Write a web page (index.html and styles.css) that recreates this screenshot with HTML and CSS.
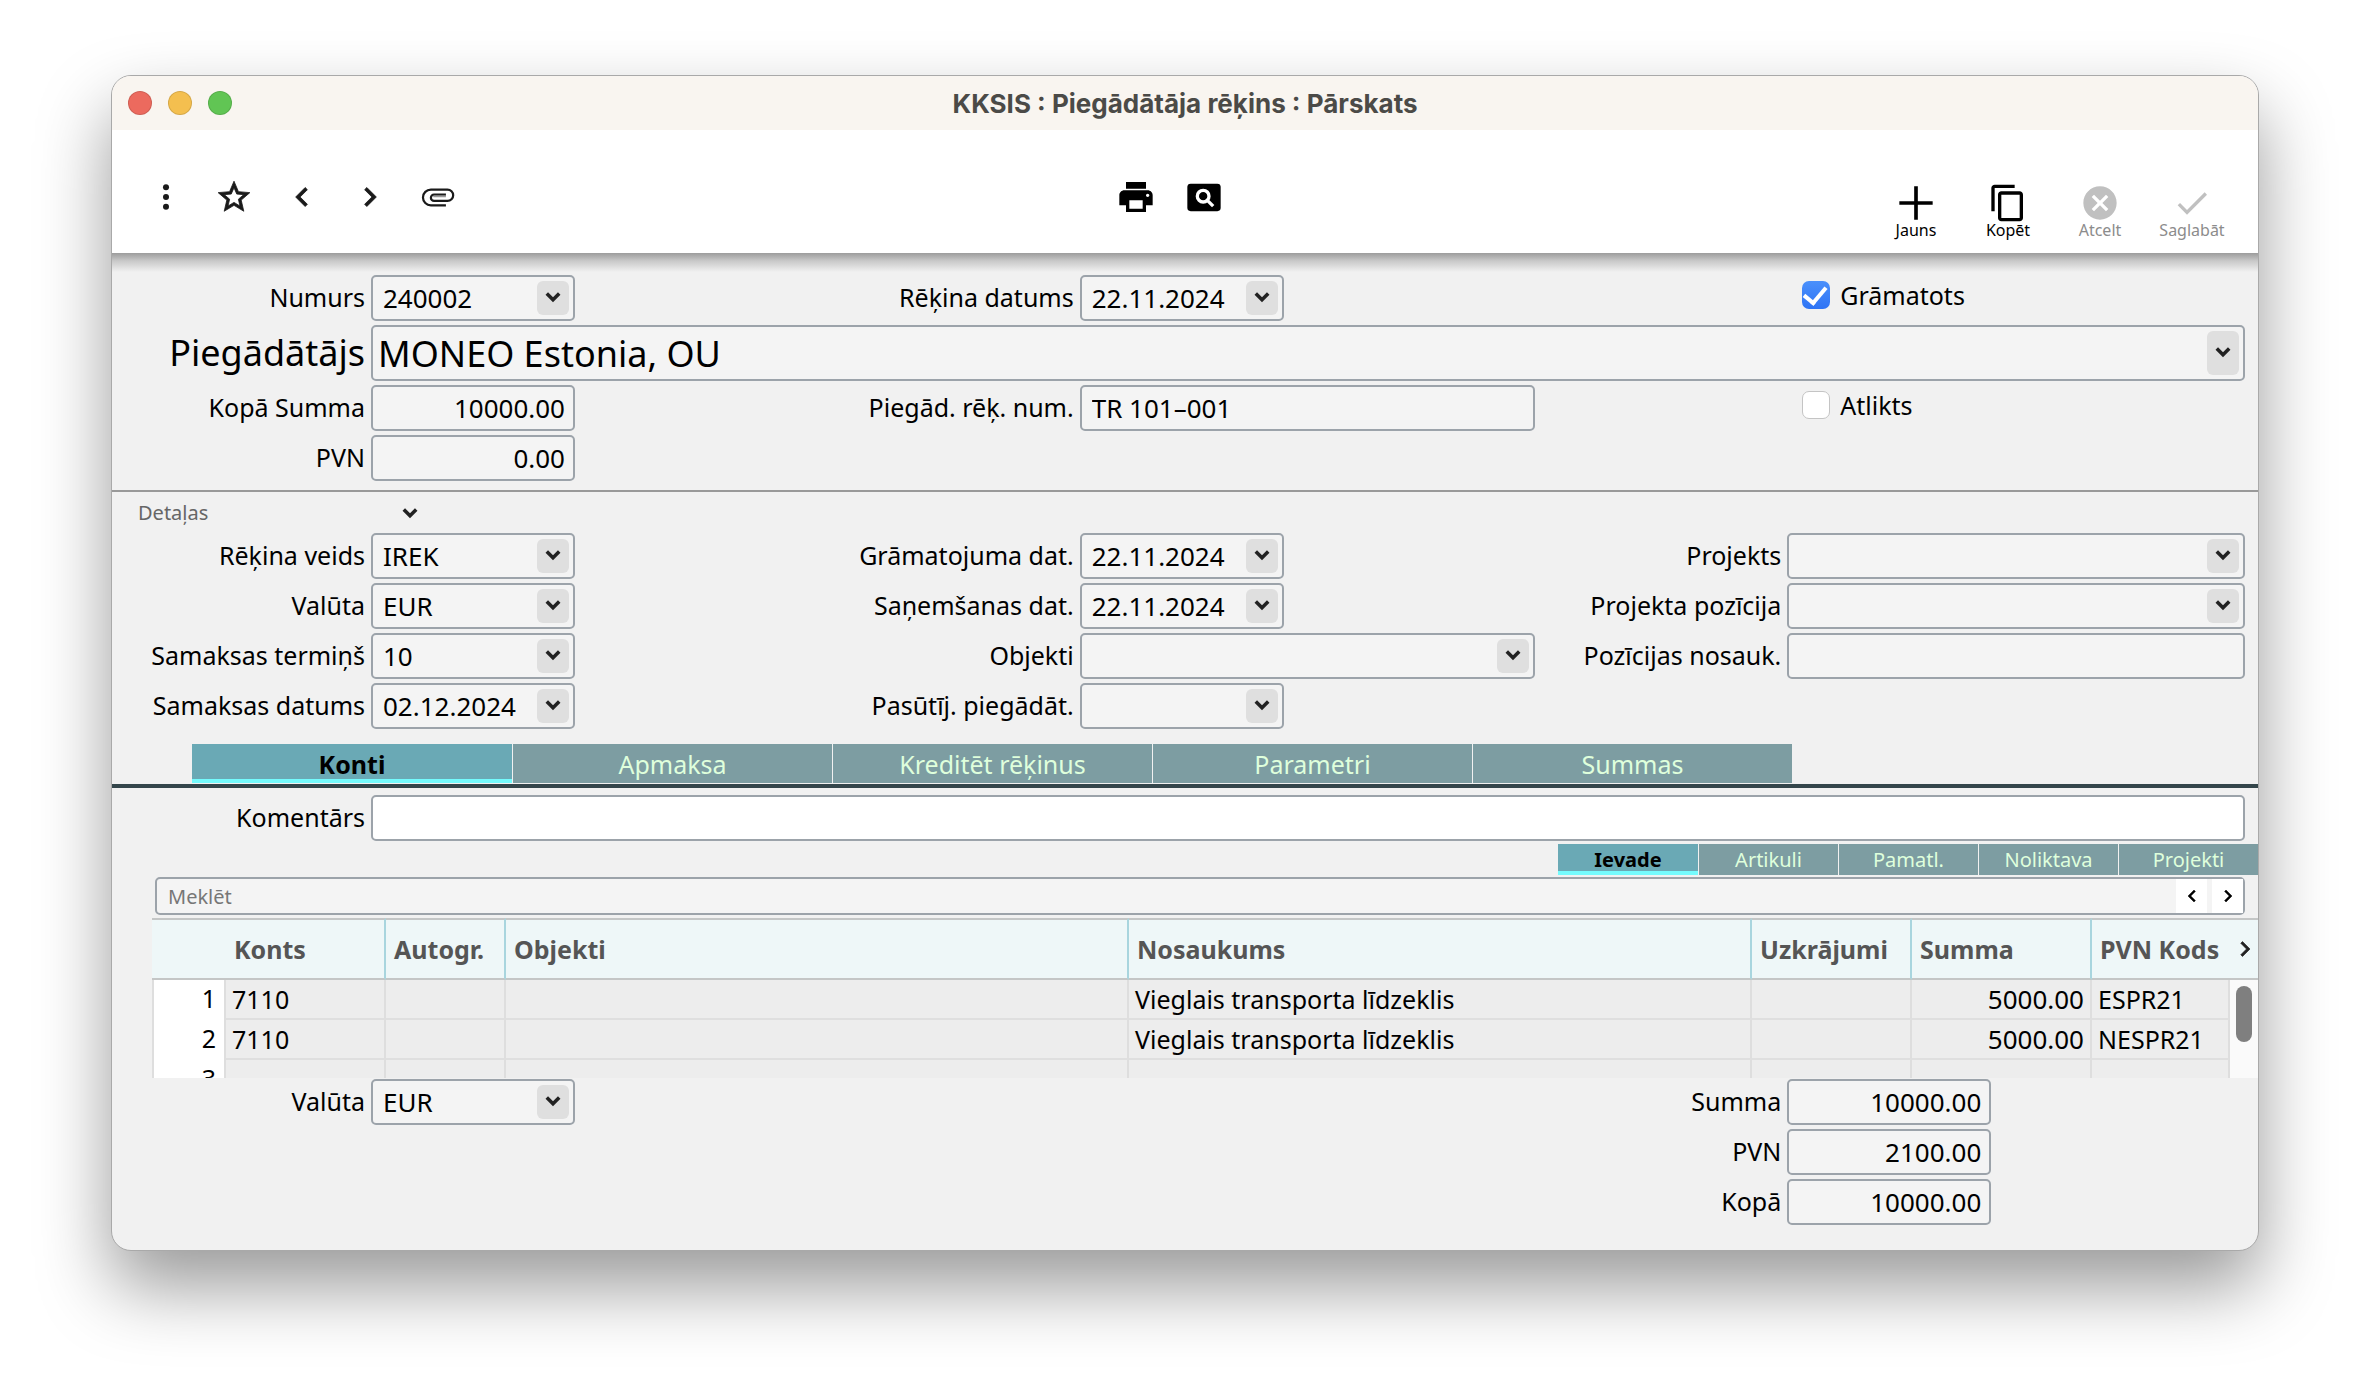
FILE: index.html
```html
<!DOCTYPE html>
<html lang="lv">
<head>
  <meta charset="UTF-8" />
  <meta name="viewport" content="width=device-width, initial-scale=1.0"/>
  <title>KKSIS : Piegādātāja rēķins : Pārskats</title>
  <link rel="stylesheet" href="styles.css">
</head>
<body>

  <!-- Shared icons -->
  <svg class="sprite" aria-hidden="true">
    <symbol id="chevron-down" viewBox="0 0 18 12"><path d="M2 2l7 7 7-7" fill="none" stroke="currentColor" stroke-width="4"/></symbol>
    <symbol id="chevron-left" viewBox="0 0 24 24"><path d="M15.4 7.4L14 6l-6 6 6 6 1.4-1.4L10.8 12z" stroke="currentColor" stroke-width=".5"/></symbol>
    <symbol id="chevron-right" viewBox="0 0 24 24"><path d="M10 6L8.6 7.4l4.6 4.6-4.6 4.6L10 18l6-6z" stroke="currentColor" stroke-width=".5"/></symbol>
  </svg>

  <main class="window">
    <header class="titlebar">
      <div class="lights">
        <button class="light red" aria-label="Aizvērt"></button>
        <button class="light yellow" aria-label="Minimizēt"></button>
        <button class="light green" aria-label="Palielināt"></button>
      </div>
      <h1>KKSIS : Piegādātāja rēķins : Pārskats</h1>
    </header>

    <div class="toolbar">
      <div class="tools">
        <button aria-label="Izvēlne"><svg viewBox="0 0 24 24"><circle cx="12" cy="5.8" r="1.9"/><circle cx="12" cy="12" r="1.9"/><circle cx="12" cy="18.2" r="1.9"/></svg></button>
        <button aria-label="Izlase"><svg viewBox="0 0 24 24"><path d="M22 9.24l-7.19-.62L12 2 9.19 8.63 2 9.24l5.46 4.73L5.82 21 12 17.27 18.18 21l-1.63-7.03L22 9.24zM12 15.4l-3.76 2.27 1-4.28-3.32-2.88 4.38-.38L12 6.1l1.71 4.04 4.38.38-3.32 2.88 1 4.28L12 15.4z" stroke="currentColor" stroke-width=".5"/></svg></button>
        <button aria-label="Iepriekšējais"><svg><use href="#chevron-left"/></svg></button>
        <button aria-label="Nākamais"><svg><use href="#chevron-right"/></svg></button>
        <button aria-label="Pielikumi"><svg viewBox="0 0 24 24"><path d="M17 17.3H7.500a5 5 0 0 1 0-10H18a3.600 3.600 0 0 1 0 7.200H9.500a2 2 0 0 1 0-4H17" fill="none" stroke="currentColor" stroke-width="1.400"/><path d="M9 11.600h8" stroke="#999" stroke-width="1.200"/></svg></button>
      </div>
      <div class="tools print-tools">
        <button aria-label="Drukāt"><svg viewBox="0 0 24 24"><path d="M19 8H5c-1.66 0-3 1.34-3 3v6h4v4h12v-4h4v-6c0-1.66-1.34-3-3-3zm-3 11H8v-5h8v5zm3-7c-.55 0-1-.45-1-1s.45-1 1-1 1 .45 1 1-.45 1-1 1zm-1-9H6v4h12V3z"/></svg></button>
        <button aria-label="Priekšskatīt"><svg viewBox="0 0 24 24"><rect x="2" y="4" width="20" height="16.500" rx="2"/><circle cx="11.500" cy="11.500" r="3.500" fill="none" stroke="#fff" stroke-width="2"/><path d="M14 14l3.500 3.500" stroke="#fff" stroke-width="2"/></svg></button>
      </div>
      <div class="actions">
        <button><svg viewBox="0 0 24 24"><path d="M12 2v20M2 12h20" stroke="currentColor" stroke-width="2.2"/></svg>Jauns</button>
        <button><svg viewBox="0 0 24 24"><path d="M16 1H4c-1.1 0-2 .9-2 2v14h2V3h12V1zm3 4H8c-1.1 0-2 .9-2 2v14c0 1.1.9 2 2 2h11c1.1 0 2-.9 2-2V7c0-1.1-.9-2-2-2zm0 16H8V7h11v14z"/></svg>Kopēt</button>
        <button disabled><svg viewBox="0 0 24 24"><path d="M12 2C6.47 2 2 6.47 2 12s4.47 10 10 10 10-4.47 10-10S17.53 2 12 2zm5 13.59L15.59 17 12 13.41 8.41 17 7 15.59 10.59 12 7 8.41 8.41 7 12 10.59 15.59 7 17 8.41 13.41 12 17 15.59z"/></svg>Atcelt</button>
        <button disabled><svg viewBox="0 0 24 24"><path d="M9 16.17L4.83 12l-1.42 1.41L9 19 21 7l-1.41-1.41z"/></svg>Saglabāt</button>
      </div>
    </div>

    <!-- Invoice header -->
    <section class="form head-form">
      <label for="number">Numurs</label>
      <div class="combo short">
        <select id="number"><option>240002</option></select>
        <svg><use href="#chevron-down"/></svg>
      </div>
      <label for="invoiceDate">Rēķina datums</label>
      <div class="combo short">
        <select id="invoiceDate"><option>22.11.2024</option></select>
        <svg><use href="#chevron-down"/></svg>
      </div>
      <label class="check"><input type="checkbox" checked>Grāmatots</label>

      <label for="supplier" class="big">Piegādātājs</label>
      <div class="combo big full">
        <select id="supplier"><option>MONEO Estonia, OU</option></select>
        <svg><use href="#chevron-down"/></svg>
      </div>

      <label for="total">Kopā Summa</label>
      <input type="text" id="total" class="short number" value="10000.00">
      <label for="supplierNo">Piegād. rēķ. num.</label>
      <input type="text" id="supplierNo" value="TR 101–001">
      <label class="check"><input type="checkbox">Atlikts</label>

      <label for="vat">PVN</label>
      <input type="text" id="vat" class="short number" value="0.00">
    </section>

    <!-- Details -->
    <section class="details">
      <button class="details-toggle">Detaļas <svg><use href="#chevron-down"/></svg></button>
      <div class="form">
        <label for="type">Rēķina veids</label>
        <div class="combo short">
          <select id="type"><option>IREK</option></select>
          <svg><use href="#chevron-down"/></svg>
        </div>
        <label for="bookDate">Grāmatojuma dat.</label>
        <div class="combo short">
          <select id="bookDate"><option>22.11.2024</option></select>
          <svg><use href="#chevron-down"/></svg>
        </div>
        <label for="project">Projekts</label>
        <div class="combo">
          <select id="project"><option></option></select>
          <svg><use href="#chevron-down"/></svg>
        </div>

        <label for="currency">Valūta</label>
        <div class="combo short">
          <select id="currency"><option>EUR</option></select>
          <svg><use href="#chevron-down"/></svg>
        </div>
        <label for="receiveDate">Saņemšanas dat.</label>
        <div class="combo short">
          <select id="receiveDate"><option>22.11.2024</option></select>
          <svg><use href="#chevron-down"/></svg>
        </div>
        <label for="projectItem">Projekta pozīcija</label>
        <div class="combo">
          <select id="projectItem"><option></option></select>
          <svg><use href="#chevron-down"/></svg>
        </div>

        <label for="terms">Samaksas termiņš</label>
        <div class="combo short">
          <select id="terms"><option>10</option></select>
          <svg><use href="#chevron-down"/></svg>
        </div>
        <label for="objects">Objekti</label>
        <div class="combo">
          <select id="objects"><option></option></select>
          <svg><use href="#chevron-down"/></svg>
        </div>
        <label for="itemName">Pozīcijas nosauk.</label>
        <input type="text" id="itemName">

        <label for="payDate">Samaksas datums</label>
        <div class="combo short">
          <select id="payDate"><option>02.12.2024</option></select>
          <svg><use href="#chevron-down"/></svg>
        </div>
        <label for="order">Pasūtīj. piegādāt.</label>
        <div class="combo short">
          <select id="order"><option></option></select>
          <svg><use href="#chevron-down"/></svg>
        </div>
      </div>
    </section>

    <nav class="tabs">
      <button class="active">Konti</button>
      <button>Apmaksa</button>
      <button>Kreditēt rēķinus</button>
      <button>Parametri</button>
      <button>Summas</button>
    </nav>

    <section class="form comment">
      <label for="comment">Komentārs</label>
      <input type="text" id="comment" class="full">
    </section>

    <nav class="subtabs">
      <button class="active">Ievade</button>
      <button>Artikuli</button>
      <button>Pamatl.</button>
      <button>Noliktava</button>
      <button>Projekti</button>
    </nav>

    <!-- Rows -->
    <div class="search">
      <input type="text" placeholder="Meklēt" aria-label="Meklēt">
      <button aria-label="Atpakaļ"><svg><use href="#chevron-left"/></svg></button>
      <button aria-label="Uz priekšu"><svg><use href="#chevron-right"/></svg></button>
    </div>

    <div class="rows">
      <table>
        <colgroup>
          <col class="c-no"><col class="c-account"><col class="c-auto"><col><col>
          <col class="c-accrual"><col class="c-sum"><col class="c-vat"><col class="c-more">
        </colgroup>
        <thead>
          <tr>
            <th></th>
            <th>Konts</th>
            <th>Autogr.</th>
            <th>Objekti</th>
            <th>Nosaukums</th>
            <th>Uzkrājumi</th>
            <th>Summa</th>
            <th>PVN Kods</th>
            <th class="more"><svg><use href="#chevron-right"/></svg></th>
          </tr>
        </thead>
        <tbody>
          <tr><th>1</th><td>7110</td><td></td><td></td><td>Vieglais transporta līdzeklis</td><td></td><td class="number">5000.00</td><td>ESPR21</td><td class="track"></td></tr>
          <tr><th>2</th><td>7110</td><td></td><td></td><td>Vieglais transporta līdzeklis</td><td></td><td class="number">5000.00</td><td>NESPR21</td><td class="track"></td></tr>
          <tr><th>3</th><td></td><td></td><td></td><td></td><td></td><td></td><td></td><td class="track"></td></tr>
        </tbody>
      </table>
      <div class="thumb"></div>
    </div>

    <section class="form totals">
      <label for="currency2">Valūta</label>
      <div class="combo short">
        <select id="currency2"><option>EUR</option></select>
        <svg><use href="#chevron-down"/></svg>
      </div>
      <label for="sum" class="third">Summa</label>
      <input type="text" id="sum" class="short number" value="10000.00">
      <label for="sumVat" class="third">PVN</label>
      <input type="text" id="sumVat" class="short number" value="2100.00">
      <label for="sumTotal" class="third">Kopā</label>
      <input type="text" id="sumTotal" class="short number" value="10000.00">
    </section>
  </main>

</body>
</html>
```
FILE: styles.css
```css
* { box-sizing: border-box; }
body { font-family: "Noto Sans", "Open Sans", sans-serif; font-size: 25px; margin: 0; padding: 75px 111px; min-height: 100vh; background: #fff; color: #000; }
button, input, select { font: inherit; color: inherit; margin: 0; }
button { border: 0; padding: 0; background: none; }
svg { display: block; fill: currentColor; }
.sprite { position: absolute; width: 0; height: 0; }

.window { border: 1px solid #a9a9a9; border-radius: 20px; overflow: hidden; background: #f1f1f1; box-shadow: 0 36px 72px rgba(0, 0, 0, 0.4); }

/* Title bar */
.titlebar { display: grid; grid-template-columns: 1fr auto 1fr; align-items: center; height: 54px; padding: 0 16px; background: #f9f5f0; }
.titlebar h1 { margin: 0; font-family: Inter, sans-serif; font-size: 26px; font-weight: 700; color: #4b4a47; }
.lights { display: flex; gap: 16px; }
.light { width: 24px; height: 24px; border-radius: 50%; border: 1px solid rgba(0, 0, 0, 0.12); }
.red { background: #ec6a5e; }
.yellow { background: #f4bf4f; }
.green { background: #61c554; }

/* Toolbar */
.toolbar { display: grid; grid-template-columns: 1fr auto 1fr; align-items: center; height: 123px; padding-top: 10px; background: #fff; }
.tools { display: flex; gap: 30px; padding-left: 35px; color: #1a1a1a; }
.tools svg { width: 38px; height: 38px; }
.print-tools { gap: 28px; color: #000; padding: 0 30px 0 0; }
.print-tools svg { width: 40px; height: 40px; }
.actions { display: flex; justify-content: flex-end; padding: 26px 20px 0 0; }
.actions button { width: 92px; font-size: 16px; line-height: 14px; }
.actions svg { width: 40px; height: 40px; margin: 0 auto; }
.actions button:disabled { color: #8c8c8c; }
.actions button:disabled svg { color: #c0c0c0; }

/* Forms */
.form { display: grid; grid-template-columns: 253px 204px 493fr 456fr 240fr 458fr; gap: 4px 6px; align-items: center; padding-right: 13px; }
.form label { text-align: right; line-height: 32px; padding-bottom: 2px; white-space: nowrap; }
.head-form { padding-top: 22px; padding-bottom: 9px; background: linear-gradient(#9c9c9c, #c9c9c9 8px, #f1f1f1 19px); border-bottom: 2px solid #999; }
.full { grid-column: 2 / -1; }
.form input[type="text"], .combo { width: 100%; height: 46px; border: 2px solid #9ca3aa; border-radius: 5px; background: #f4f4f4; }
.form input[type="text"] { padding: 0 8px 0 10px; font-size: 26px; }
.form .combo.short, .form input.short { width: 204px; }
.form .number, .rows .number { text-align: right; font-size: 26px; }

.combo { position: relative; }
.combo select { width: 100%; height: 100%; padding: 0 40px 0 10px; border: 0; background: none; appearance: none; font-size: 26px; }
.combo svg { position: absolute; top: 4px; right: 4px; width: 32px; height: calc(100% - 8px); padding: 0 8px 2px; border-radius: 6px; background: #dfdfdf; color: #222; pointer-events: none; }
.form .big { font-size: 36px; padding: 0; }
.combo.big { height: 56px; }
.combo.big select { font-size: 36px; padding-left: 5px; }

.form .check { display: flex; align-items: center; gap: 10px; grid-column: 6; padding: 0 0 6px 15px; }
.check input { appearance: none; width: 28px; height: 28px; margin: 0; border: 1px solid #c4c4c4; border-radius: 7px; background: #fff; }
.check input:checked { border: 0; background: linear-gradient(#4a90fb, #2f74f5); display: grid; place-items: center; }
.check input:checked::after { content: ""; width: 10px; height: 18px; border: solid #fff; border-width: 0 4px 4px 0; transform: rotate(40deg) translate(-2px, -1px); }

.details { padding-bottom: 15px; }
.details-toggle { display: flex; align-items: center; justify-content: space-between; width: 280px; height: 41px; margin-left: 26px; font-size: 20px; color: #666; }
.details-toggle svg { width: 16px; height: 12px; color: #222; }

/* Tabs */
.tabs { display: flex; padding: 0 80px 1px; border-bottom: 4px solid #34464b; }
.tabs button, .subtabs button { background: #7d9da2; color: #dfffdc; border-left: 1px solid #f1f1f1; }
.tabs button { flex: 0 1 320px; height: 39px; }
.tabs .active, .subtabs .active { background: #6aa9b5; color: #000; font-weight: 700; border-left: 0; box-shadow: inset 0 -4px #74fbfd; }
.comment { padding-top: 7px; padding-bottom: 3px; }
.form #comment { background: #fff; }
.subtabs { display: flex; justify-content: flex-end; }
.subtabs button { flex: 0 1 140px; height: 31px; font-size: 20px; line-height: 28px; }

/* Rows */
.search { display: flex; gap: 5px; height: 38px; margin: 2px 13px 3px 43px; border: 2px solid #9ca3aa; border-radius: 5px; background: #f4f4f4; }
.search input { flex: 1; min-width: 0; border: 0; padding: 0 11px; background: none; font-size: 20px; }
.search input::placeholder { color: #777; }
.search button { width: 31px; background: #fff; display: grid; place-items: center; }
.search svg { width: 24px; height: 24px; }

.rows { position: relative; height: 160px; margin-left: 40px; overflow: hidden; }
.rows table { width: 100%; table-layout: fixed; border-collapse: separate; border-spacing: 0; }
.c-no { width: 74px; }
.c-account, .c-accrual { width: 160px; }
.c-auto { width: 120px; }
.c-sum { width: 180px; }
.c-vat { width: 138px; }
.c-more { width: 28px; }
.rows th { padding: 0 8px; text-align: left; white-space: nowrap; }
.rows td { padding: 0 6px 1px; white-space: nowrap; }
.rows thead th { height: 62px; border-top: 2px solid #c4c6c6; border-bottom: 2px solid #c4c6c6; border-right: 2px solid #a8d5de; background: #eef7f8; color: #555; }
.rows thead th:first-child, .rows thead th:nth-last-child(-n + 2) { border-right: 0; }
.rows thead .more { padding: 0; color: #222; }
.more svg { width: 30px; height: 30px; }
.rows td, .rows tbody th { height: 40px; line-height: 34px; border-right: 2px solid #dedede; }
.rows td { background: #ededed; border-bottom: 2px solid #dfdfdf; }
.rows tbody th { padding-bottom: 4px; background: #fff; font-weight: 400; text-align: right; border-left: 2px solid #dedede; }
.rows .track { background: #fafafa; border: 0; }
.thumb { position: absolute; top: 68px; right: 6px; width: 16px; height: 56px; border-radius: 8px; background: #7f7f7f; }

.totals { padding-top: 1px; padding-bottom: 25px; }
.form .third { grid-column: 5; }
```
